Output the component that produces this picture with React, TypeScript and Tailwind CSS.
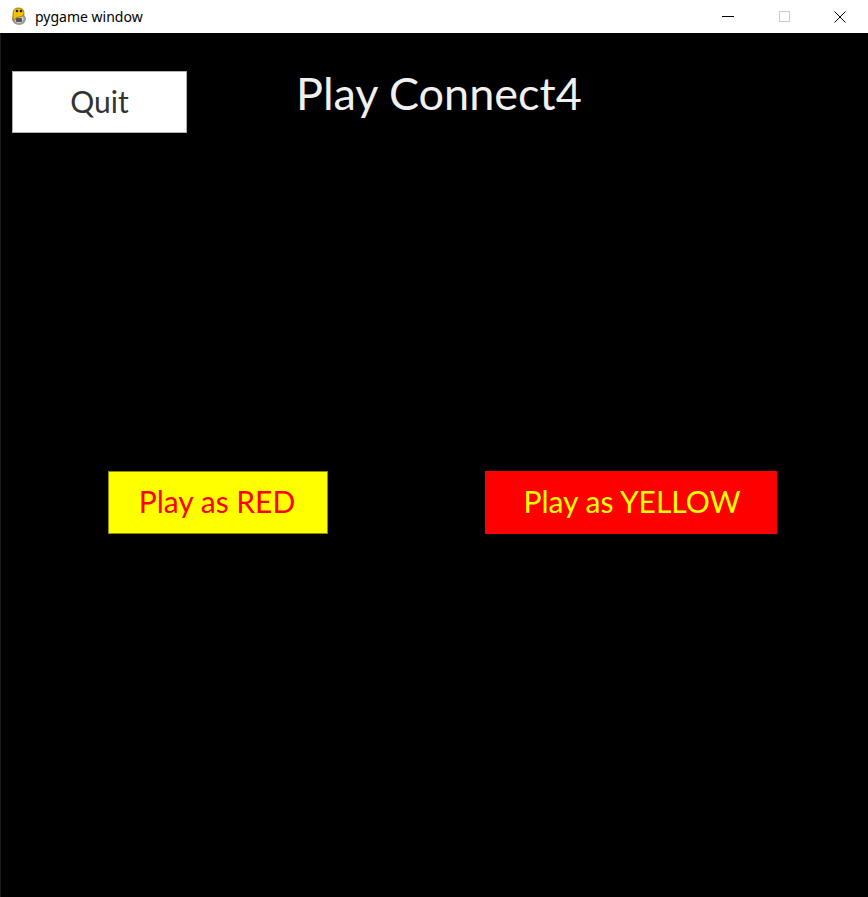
function PygameIcon() {
  return (
    <svg width="18" height="20" viewBox="0 0 18 20">
      <ellipse cx="9" cy="13" rx="7" ry="6" fill="#9a9a9a" />
      <ellipse cx="9" cy="13" rx="4.5" ry="4" fill="#d8d8d8" />
      <path d="M3 8 Q3 2 8 2 Q14 2 14 7 Q14 11 9 11 Q5 11 5 14 L3 14 Z" fill="#f2c200" stroke="#8a6a00" strokeWidth="0.8" />
      <circle cx="7" cy="5" r="1.3" fill="#222" />
      <circle cx="11" cy="5" r="1.3" fill="#222" />
      <rect x="6" y="12" width="6" height="4" rx="1" fill="#555" />
    </svg>
  );
}

export default function App() {
  return (
    <div className="w-[868px] h-[897px] flex flex-col bg-black overflow-hidden" style={{ fontFamily: "Lato, 'Open Sans', sans-serif" }}>
      {/* title bar */}
      <div className="h-[33px] bg-white flex items-center shrink-0">
        <div className="ml-[10px] mt-[-2px]">
          <PygameIcon />
        </div>
        <span className="ml-[7px] text-[14px] text-black mt-[-1px]" style={{ fontFamily: "'Noto Sans', 'Open Sans', sans-serif" }}>
          pygame window
        </span>
        <div className="ml-auto flex h-full">
          <div className="w-[56px] h-full flex items-center justify-center">
            <div className="w-[12px] h-px bg-black" />
          </div>
          <div className="w-[56px] h-full flex items-center justify-center">
            <div className="w-[11px] h-[11px] border border-[#cccccc]" />
          </div>
          <div className="w-[56px] h-full flex items-center justify-center">
            <svg width="12" height="12" viewBox="0 0 12 12">
              <path d="M0.5 0.5 L11.5 11.5 M11.5 0.5 L0.5 11.5" stroke="#000" strokeWidth="1" />
            </svg>
          </div>
        </div>
      </div>

      {/* game surface */}
      <div className="flex-1 border-l border-[#1a1a1a]">
        <div className="flex items-start pt-[38px] pl-[11px]">
          <div className="w-[175px] h-[62px] bg-white border border-[#b0b0b0] flex items-center justify-center text-[30px] text-[#333333] pb-[2px]">
            Quit
          </div>
          <div className="ml-[109px] mt-[0px] text-[45px] text-[#f0f0f0] leading-none">
            Play Connect4
          </div>
        </div>

        <div className="flex items-start mt-[338px] pl-[107px]">
          <div className="w-[220px] h-[63px] bg-[#ffff00] border border-[#8a8a00] flex items-center justify-center text-[30px] text-[#ff0000] pb-[3px] pr-[2px]">
            Play as RED
          </div>
          <div className="ml-[157px] w-[292px] h-[63px] bg-[#ff0000] flex items-center justify-center text-[30px] text-[#ffff00] pb-[3px] pl-[2px]">
            Play as YELLOW
          </div>
        </div>
      </div>
    </div>
  );
}
